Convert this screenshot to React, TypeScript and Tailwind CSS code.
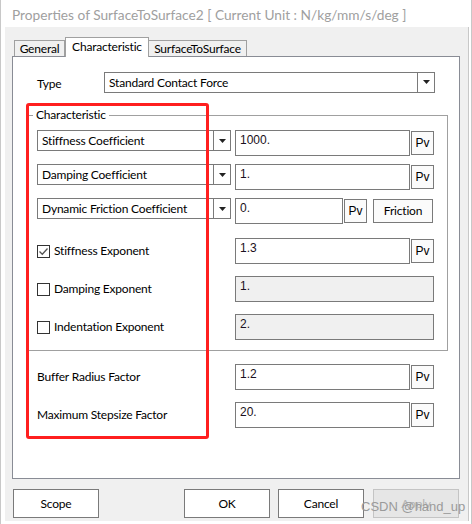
import React from 'react';

const ui = { fontFamily: 'Lato, "Noto Sans", sans-serif' };
const num = { fontFamily: '"Liberation Sans", Arial, sans-serif' };

const Arrow = () => (
  <svg width="7" height="4" viewBox="0 0 7 4">
    <path d="M0 0h7L3.5 4z" fill="#222" />
  </svg>
);

// combo box with the little drop button
const Combo = ({ text, w }: { text: string; w: string }) => (
  <div className={`flex h-[21px] ${w} border border-[#7a7a7a] bg-white`}>
    <div className="flex-1 pl-[4px] pt-[1px] leading-[18px] text-black truncate">{text}</div>
    <div className="flex w-[17px] items-center justify-center border-l border-[#7a7a7a]">
      <Arrow />
    </div>
  </div>
);

const Field = ({ value, w, disabled }: { value: string; w: string; disabled?: boolean }) => (
  <div
    className={`h-[26px] ${w} border border-[#7a7a7a] px-[4px] pt-[2px] text-[12px] leading-[14px] tracking-normal text-[#1a1020] ${
      disabled ? 'bg-[#f0f0f0] h-[25px]' : 'bg-white'
    }`}
    style={num}
  >
    {value}
  </div>
);

const Pv = () => (
  <div
    className="mt-[1px] ml-[1px] flex h-[24px] w-[23px] items-center justify-center border border-[#7a7a7a] bg-[#fbfbfb] text-[12px] tracking-normal text-black"
    style={num}
  >
    Pv
  </div>
);

const Check = ({ checked }: { checked?: boolean }) => (
  <div className="flex h-[13px] w-[13px] items-center justify-center border border-[#333] bg-white">
    {checked && (
      <svg width="11" height="11" viewBox="0 0 11 11">
        <path d="M1.5 5.5l2.8 2.8L9.5 2.5" stroke="#555" strokeWidth="1.3" fill="none" />
      </svg>
    )}
  </div>
);

const Button = ({ label, disabled }: { label: string; disabled?: boolean }) => (
  <div
    className={`flex h-[29px] w-[86px] items-center justify-center border ${
      disabled ? 'border-[#c4c4c4] bg-[#e6e6e6] text-[#b4b4b4]' : 'border-[#7a7a7a] bg-white text-black'
    }`}
  >
    {label}
  </div>
);

export default function App() {
  return (
    <div
      className="relative h-[524px] w-[472px] overflow-hidden border-x border-[#c8c8c8] bg-white text-[12px] tracking-[-0.2px]"
      style={ui}
    >
      {/* title */}
      <div className="h-[27px] pl-[11px] pt-[5px] text-[13.7px] leading-[20px] tracking-normal text-[#a0a0a0] whitespace-nowrap">
        Properties of SurfaceToSurface2 [ Current Unit : N/kg/mm/s/deg ]
      </div>

      <div className="ml-[4px] h-[494px] w-[464px] border-r border-[#c8c8c8] bg-[#f0f0f0] pt-[10px]">
        {/* tabs */}
        <div className="flex h-[19px] items-end pl-[9px]">
          <div className="flex h-[16px] w-[51px] items-center justify-center border border-b-0 border-[#a0a0a0] bg-[#f0f0f0] pt-[1px] text-black">
            General
          </div>
          <div className="relative z-10 -mb-[1px] flex h-[20px] w-[84px] items-start justify-center border border-b-0 border-[#a0a0a0] bg-white pt-[1px] leading-[16px] text-black">
            Characteristic
          </div>
          <div className="flex h-[16px] w-[98px] items-center justify-center border border-b-0 border-l-0 border-[#a0a0a0] bg-[#f0f0f0] pt-[1px] text-black">
            SurfaceToSurface
          </div>
        </div>

        {/* panel */}
        <div className="ml-[7px] h-[423px] w-[448px] border border-[#898c95] bg-white">
          <div className="flex items-center pt-[14px]">
            <div className="w-[91px] pl-[24px] pt-[4px] text-black">Type</div>
            <Combo text="Standard Contact Force" w="w-[331px]" />
          </div>

          {/* group box */}
          <div className="relative ml-[15px] mt-[22px] h-[236px] w-[420px] border border-[#a0a0a0] pl-[8px] pt-[14px]">
            <div className="absolute -top-[10px] left-[4px] bg-white px-[3px] leading-[18px] text-black">
              Characteristic
            </div>

            <div className="flex flex-col gap-[8px]">
              <div className="flex items-start">
                <Combo text="Stiffness Coefficient" w="w-[194px]" />
                <div className="ml-[4px] flex">
                  <Field value="1000." w="w-[175px]" />
                  <Pv />
                </div>
              </div>
              <div className="flex items-start">
                <Combo text="Damping Coefficient" w="w-[194px]" />
                <div className="ml-[4px] flex">
                  <Field value="1." w="w-[175px]" />
                  <Pv />
                </div>
              </div>
              <div className="flex items-start">
                <Combo text="Dynamic Friction Coefficient" w="w-[194px]" />
                <div className="ml-[4px] flex">
                  <Field value="0." w="w-[108px]" />
                  <Pv />
                  <div className="ml-[6px] mt-[1px] flex h-[24px] w-[60px] items-center justify-center border border-[#7a7a7a] bg-[#fbfbfb] text-black">
                    Friction
                  </div>
                </div>
              </div>
            </div>

            <div className="mt-[14px] flex flex-col gap-[12px]">
              <div className="flex items-center">
                <div className="flex w-[198px] items-center gap-[4px] text-black">
                  <Check checked />
                  <span>Stiffness Exponent</span>
                </div>
                <div className="flex">
                  <Field value="1.3" w="w-[175px]" />
                  <Pv />
                </div>
              </div>
              <div className="flex items-center">
                <div className="flex w-[198px] items-center gap-[4px] text-black">
                  <Check />
                  <span>Damping Exponent</span>
                </div>
                <Field value="1." w="w-[199px]" disabled />
              </div>
              <div className="flex items-center">
                <div className="flex w-[198px] items-center gap-[4px] text-black">
                  <Check />
                  <span>Indentation Exponent</span>
                </div>
                <Field value="2." w="w-[199px]" disabled />
              </div>
            </div>
          </div>

          <div className="mt-[13px] flex flex-col gap-[12px] pl-[24px]">
            <div className="flex items-center">
              <div className="w-[198px] text-black">Buffer Radius Factor</div>
              <div className="flex">
                <Field value="1.2" w="w-[175px]" />
                <Pv />
              </div>
            </div>
            <div className="flex items-center">
              <div className="w-[198px] text-black">Maximum Stepsize Factor</div>
              <div className="flex">
                <Field value="20." w="w-[175px]" />
                <Pv />
              </div>
            </div>
          </div>
        </div>

        {/* buttons */}
        <div className="mt-[10px] flex pl-[8px]">
          <Button label="Scope" />
          <div className="ml-[85px] flex gap-[8px]">
            <Button label="OK" />
            <Button label="Cancel" />
            <div className="ml-[1px]">
              <Button label="Apply" disabled />
            </div>
          </div>
        </div>
      </div>

      {/* watermark */}
      <div
        className="absolute left-[360px] top-[498px] text-[13px] leading-[18px] tracking-normal text-[#9a9a9a] whitespace-nowrap"
        style={num}
      >
        CSDN @hand_up
      </div>

      {/* red highlight drawn over the dialog */}
      <div className="absolute left-[25px] top-[103px] h-[336px] w-[183px] rounded-[3px] border-[3px] border-[#ff1f1f]" />
    </div>
  );
}
